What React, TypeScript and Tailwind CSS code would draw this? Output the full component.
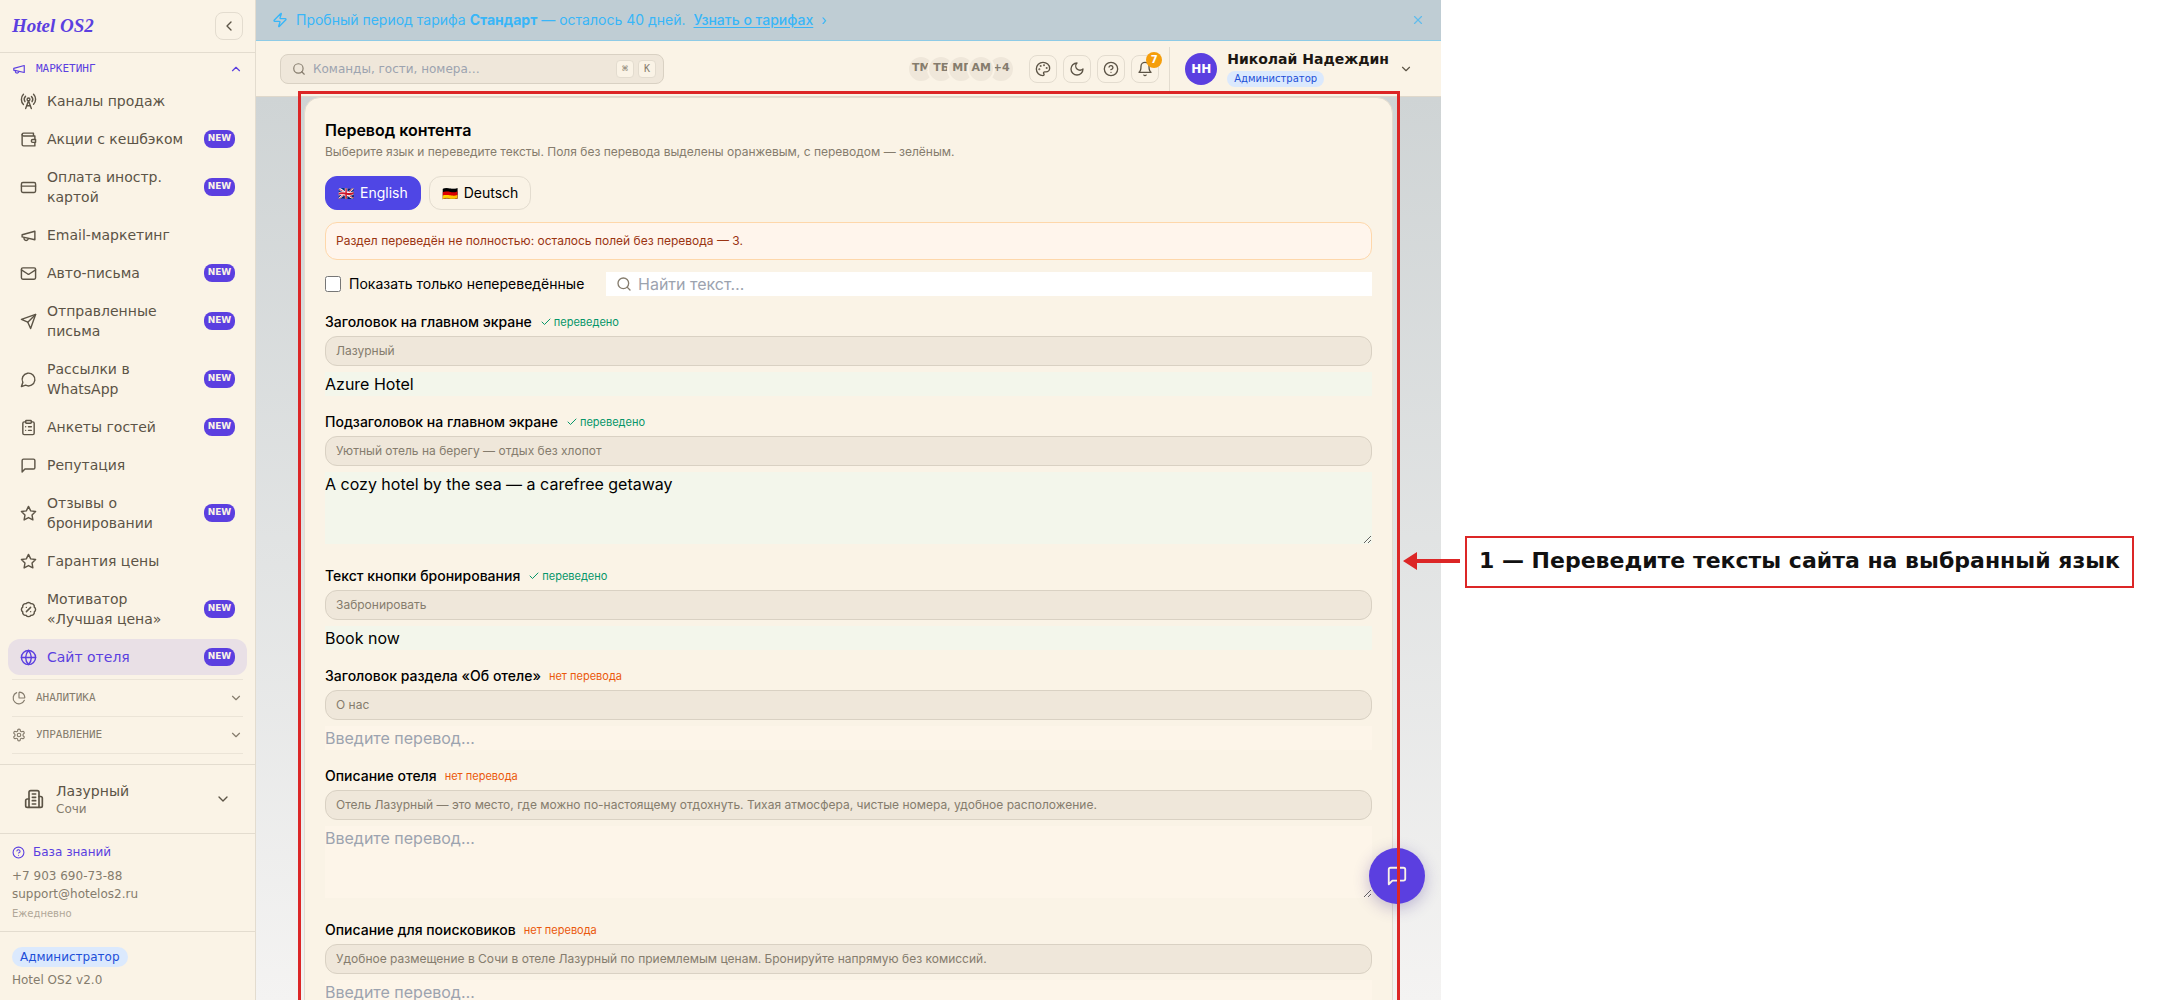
import React from "react";
import {
  RadioTower, CreditCard, Mail, ClipboardList, BadgePercent, Globe, PieChart, ChevronDown, ChevronUp, ChevronLeft,
  CircleHelp, Zap, X, Search, Check,
} from "lucide-react";

type IconProps = { className?: string };
type Icon = React.ComponentType<IconProps>;

function stroked(children: React.ReactNode): Icon {
  return function StrokedIcon({ className }: IconProps) {
    return (
      <svg viewBox="0 0 24 24" fill="none" stroke="currentColor" strokeWidth={2} strokeLinecap="round" strokeLinejoin="round" aria-hidden="true" className={className}>
        {children}
      </svg>
    );
  };
}

const Megaphone = stroked(<><path d="m3 11 18-5v12L3 14v-3z" /><path d="M11.6 16.8a3 3 0 1 1-5.8-1.6" /></>);
const Wallet = stroked(<><path d="M21 12V7H5a2 2 0 0 1 0-4h14v4" /><path d="M3 5v14a2 2 0 0 0 2 2h16v-5" /><path d="M18 12a2 2 0 0 0 0 4h4v-4Z" /></>);
const Send = stroked(<><path d="m22 2-7 20-4-9-9-4Z" /><path d="M22 2 11 13" /></>);
const MessageCircle = stroked(<path d="M7.9 20A9 9 0 1 0 4 16.1L2 22Z" />);
const MessageSquare = stroked(<path d="M21 15a2 2 0 0 1-2 2H7l-4 4V5a2 2 0 0 1 2-2h14a2 2 0 0 1 2 2z" />);
const Star = stroked(<polygon points="12 2 15.09 8.26 22 9.27 17 14.14 18.18 21.02 12 17.77 5.82 21.02 7 14.14 2 9.27 8.91 8.26 12 2" />);
const Building = stroked(
  <>
    <path d="M6 22V4a2 2 0 0 1 2-2h8a2 2 0 0 1 2 2v18Z" />
    <path d="M6 12H4a2 2 0 0 0-2 2v6a2 2 0 0 0 2 2h2" />
    <path d="M18 9h2a2 2 0 0 1 2 2v9a2 2 0 0 1-2 2h-2" />
    <path d="M10 6h4M10 10h4M10 14h4M10 18h4" />
  </>,
);
const Settings = stroked(
  <>
    <path d="M12.22 2h-.44a2 2 0 0 0-2 2v.18a2 2 0 0 1-1 1.73l-.43.25a2 2 0 0 1-2 0l-.15-.08a2 2 0 0 0-2.73.73l-.22.38a2 2 0 0 0 .73 2.73l.15.1a2 2 0 0 1 1 1.72v.51a2 2 0 0 1-1 1.74l-.15.09a2 2 0 0 0-.73 2.73l.22.38a2 2 0 0 0 2.73.73l.15-.08a2 2 0 0 1 2 0l.43.25a2 2 0 0 1 1 1.73V20a2 2 0 0 0 2 2h.44a2 2 0 0 0 2-2v-.18a2 2 0 0 1 1-1.73l.43-.25a2 2 0 0 1 2 0l.15.08a2 2 0 0 0 2.73-.73l.22-.39a2 2 0 0 0-.73-2.73l-.15-.08a2 2 0 0 1-1-1.74v-.5a2 2 0 0 1 1-1.74l.15-.09a2 2 0 0 0 .73-2.73l-.22-.38a2 2 0 0 0-2.73-.73l-.15.08a2 2 0 0 1-2 0l-.43-.25a2 2 0 0 1-1-1.73V4a2 2 0 0 0-2-2z" />
    <circle cx="12" cy="12" r="3" />
  </>,
);
const Moon = stroked(<path d="M12 3a6 6 0 0 0 9 9 9 9 0 1 1-9-9Z" />);
const Bell = stroked(<><path d="M6 8a6 6 0 0 1 12 0c0 7 3 9 3 9H3s3-2 3-9" /><path d="M10.3 21a1.94 1.94 0 0 0 3.4 0" /></>);
const Palette = stroked(
  <>
    <circle cx="13.5" cy="6.5" r=".5" fill="currentColor" />
    <circle cx="17.5" cy="10.5" r=".5" fill="currentColor" />
    <circle cx="8.5" cy="7.5" r=".5" fill="currentColor" />
    <circle cx="6.5" cy="12.5" r=".5" fill="currentColor" />
    <path d="M12 2C6.5 2 2 6.5 2 12s4.5 10 10 10c.926 0 1.648-.746 1.648-1.688 0-.437-.18-.835-.437-1.125-.29-.289-.438-.652-.438-1.125a1.64 1.64 0 0 1 1.668-1.668h1.996c3.051 0 5.555-2.503 5.555-5.554C21.965 6.012 17.461 2 12 2z" />
  </>,
);

const navItems: { icon: Icon; label: string; isNew?: boolean; active?: boolean }[] = [
  { icon: RadioTower, label: "Каналы продаж" },
  { icon: Wallet, label: "Акции с кешбэком", isNew: true },
  { icon: CreditCard, label: "Оплата иностр. картой", isNew: true },
  { icon: Megaphone, label: "Email-маркетинг" },
  { icon: Mail, label: "Авто-письма", isNew: true },
  { icon: Send, label: "Отправленные письма", isNew: true },
  { icon: MessageCircle, label: "Рассылки в WhatsApp", isNew: true },
  { icon: ClipboardList, label: "Анкеты гостей", isNew: true },
  { icon: MessageSquare, label: "Репутация" },
  { icon: Star, label: "Отзывы о бронировании", isNew: true },
  { icon: Star, label: "Гарантия цены" },
  { icon: BadgePercent, label: "Мотиватор «Лучшая цена»", isNew: true },
  { icon: Globe, label: "Сайт отеля", isNew: true, active: true },
];

const fields: { id: string; label: string; source: string; value: string; multiline?: boolean }[] = [
  { id: "hero-title", label: "Заголовок на главном экране", source: "Лазурный", value: "Azure Hotel" },
  { id: "hero-sub", label: "Подзаголовок на главном экране", source: "Уютный отель на берегу — отдых без хлопот", value: "A cozy hotel by the sea — a carefree getaway", multiline: true },
  { id: "cta", label: "Текст кнопки бронирования", source: "Забронировать", value: "Book now" },
  { id: "about-title", label: "Заголовок раздела «Об отеле»", source: "О нас", value: "" },
  { id: "about", label: "Описание отеля", source: "Отель Лазурный — это место, где можно по-настоящему отдохнуть. Тихая атмосфера, чистые номера, удобное расположение.", value: "", multiline: true },
  { id: "seo", label: "Описание для поисковиков", source: "Удобное размещение в Сочи в отеле Лазурный по приемлемым ценам. Бронируйте напрямую без комиссий.", value: "", multiline: true },
];

function Sidebar() {
  return (
    <aside className="flex w-64 shrink-0 flex-col border-r border-[#e3dccf] bg-[#faf3e6] font-['DejaVu_Sans',sans-serif] text-[#5c5446]">
      <div className="flex h-[53px] shrink-0 items-center justify-between border-b border-[#e3dccf] px-3">
        <span className="font-['Liberation_Serif',serif] text-[19px] font-bold text-[#5b3fe0] italic">Hotel OS2</span>
        <button aria-label="Свернуть меню" className="flex size-7 items-center justify-center rounded-lg border border-[#e3dccf]">
          <ChevronLeft className="size-4" />
        </button>
      </div>
      <nav className="min-h-0 flex-1 overflow-hidden">
        <button className="flex h-[30px] w-full items-center px-3 pt-[2px] font-['DejaVu_Sans_Mono',monospace] text-[11px] text-[#5b3fe0]">
          <Megaphone className="mr-[10px] size-[14px]" />
          МАРКЕТИНГ
          <ChevronUp className="ml-auto size-[14px]" />
        </button>
        <ul className="flex flex-col gap-[2px] px-2">
          {navItems.map(({ icon: I, label, isNew, active }) => (
            <li key={label}>
              <a href="#" className={active ? "flex items-center gap-[10px] rounded-xl bg-[#e9e0e6] px-3 py-2 text-sm text-[#5b3fe0]" : "flex items-center gap-[10px] rounded-xl px-3 py-2 text-sm"}>
                <I className="size-[17px] shrink-0" />
                <span className="flex-1">{label}</span>
                {isNew && <span className="h-[18px] w-[31px] shrink-0 rounded-lg bg-[#5b3fe0] text-center text-[9px] leading-4 font-bold text-[#faf3e6]">NEW</span>}
              </a>
            </li>
          ))}
        </ul>
        <div className="mt-1 px-3 font-['DejaVu_Sans_Mono',monospace] text-[11px] text-[#857c6d]">
          <button className="flex h-[37px] w-full items-center border-t border-[#ebe4d7]">
            <PieChart className="mr-[10px] size-[14px]" />
            АНАЛИТИКА
            <ChevronDown className="ml-auto size-[14px]" />
          </button>
          <button className="flex h-[38px] w-full items-center border-y border-[#ebe4d7]">
            <Settings className="mr-[10px] size-[14px]" />
            УПРАВЛЕНИЕ
            <ChevronDown className="ml-auto size-[14px]" />
          </button>
        </div>
      </nav>
      <button className="flex h-[69px] shrink-0 items-center border-t border-[#e3dccf] px-6 text-left">
        <Building className="mr-3 size-5" />
        <span className="flex-1">
          <span className="block text-sm">Лазурный</span>
          <span className="block text-xs text-[#857c6d]">Сочи</span>
        </span>
        <ChevronDown className="size-4" />
      </button>
      <div className="flex h-[98px] shrink-0 flex-col border-t border-[#e3dccf] px-3 pt-[9px] text-xs leading-[18px] text-[#857c6d]">
        <a href="#" className="mb-[6px] flex items-center gap-2 text-[#5b3fe0]">
          <CircleHelp className="size-[13px]" />
          База знаний
        </a>
        <a href="#">+7 903 690-73-88</a>
        <a href="#">support@hotelos2.ru</a>
        <span className="mt-[2px] text-[10px] text-[#b0a798]">Ежедневно</span>
      </div>
      <div className="flex h-[69px] shrink-0 flex-col items-start border-t border-[#e3dccf] px-3 pt-[15px] text-xs text-[#857c6d]">
        <span className="rounded-full bg-[#dbe9fd] px-2 leading-5 text-[#1d4fd8]">Администратор</span>
        <span className="mt-[5px]">Hotel OS2 v2.0</span>
      </div>
    </aside>
  );
}

function Banner() {
  return (
    <div className="flex h-[41px] shrink-0 items-center border-b border-[#8ecbe6] bg-[#bfcdd4] px-4 text-sm text-[#38b6f8]">
      <Zap className="mr-2 size-4" />
      <p>
        Пробный период тарифа <strong className="font-bold">Стандарт</strong> — осталось 40 дней.
      </p>
      <a href="#" className="ml-2 font-medium underline underline-offset-2">Узнать о тарифах</a>
      <span className="ml-2">›</span>
      <button aria-label="Закрыть" className="ml-auto opacity-70">
        <X className="size-[14px]" />
      </button>
    </div>
  );
}

const avatars = ["ТМ", "ТБ", "МГ", "АМ", "+4"];

function Header() {
  return (
    <header className="flex h-14 shrink-0 items-center border-b border-[#dfd8cb] bg-[#faf3e6] pr-7 pl-6 font-['DejaVu_Sans',sans-serif] text-[#5c5446]">
      <label className="flex h-[30px] w-[384px] items-center rounded-lg border border-[#d9d1c3] bg-[#efe7da] pr-[7px] pl-2">
        <Search className="mx-[3px] size-[14px] text-[#857c6d]" />
        <input aria-label="Поиск" placeholder="Команды, гости, номера…" className="ml-1 min-w-0 flex-1 bg-transparent text-xs outline-none placeholder:text-[#9ca3af]" />
        <kbd className="mr-1 flex size-[18px] items-center justify-center rounded border border-[#e3dccf] bg-[#faf3e6] font-['DejaVu_Sans_Mono',monospace] text-[10px] text-[#857c6d]">⌘</kbd>
        <kbd className="flex size-[18px] items-center justify-center rounded border border-[#e3dccf] bg-[#faf3e6] font-['DejaVu_Sans_Mono',monospace] text-[10px] text-[#857c6d]">K</kbd>
      </label>
      <div className="isolate ml-auto flex -space-x-2">
        {avatars.map((a) => (
          <span key={a} className={a === "АМ" ? "z-10 flex size-7 items-center justify-center rounded-full border-2 border-[#faf3e6] bg-[#efe7da] text-[11px] font-bold text-[#857c6d]" : "flex size-7 items-center justify-center rounded-full border-2 border-[#faf3e6] bg-[#efe7da] text-[11px] font-bold text-[#857c6d]"}>{a}</span>
        ))}
      </div>
      <div className="ml-[14px] flex gap-[6px]">
        {[{ i: Palette, l: "Тема" }, { i: Moon, l: "Ночной режим" }, { i: CircleHelp, l: "Помощь" }].map(({ i: I, l }) => (
          <button key={l} aria-label={l} className="flex size-7 items-center justify-center rounded-lg border border-[#e3dccf]">
            <I className="size-4" />
          </button>
        ))}
        <button aria-label="Уведомления" className="relative flex size-7 items-center justify-center rounded-lg border border-[#e3dccf]">
          <Bell className="size-4" />
          <span className="absolute -top-1 -right-1 flex size-4 items-center justify-center rounded-full bg-[#f59e0b] text-[10px] font-bold text-white">7</span>
        </button>
      </div>
      <div className="ml-[10px] h-11 w-px bg-[#e3dccf]" />
      <button className="ml-[15px] flex items-center text-left">
        <span className="mr-[10px] flex size-8 items-center justify-center rounded-full bg-[#5b3fe0] text-xs font-bold text-white">НН</span>
        <span className="flex flex-col items-start gap-1">
          <span className="text-sm leading-4 font-bold text-[#1c1712]">Николай Надеждин</span>
          <span className="rounded-full bg-[#dbe9fd] px-[7px] text-[10px] leading-4 text-[#1d4fd8]">Администратор</span>
        </span>
        <ChevronDown className="ml-[10px] size-[14px]" />
      </button>
    </header>
  );
}

function TranslationCard() {
  return (
    <section className="rounded-2xl border border-[#e3dccf] bg-[#faf3e6] p-5 text-black">
      <h2 className="text-base font-semibold">Перевод контента</h2>
      <p className="mt-[2px] text-xs text-[#857c6d]">Выберите язык и переведите тексты. Поля без перевода выделены оранжевым, с переводом — зелёным.</p>
      <div className="mt-4 flex gap-2 text-sm">
        <button className="flex h-[34px] items-center gap-[6px] rounded-xl border border-[#4f46e5] bg-[#4f46e5] px-3 text-white"><span className="text-[13px]">🇬🇧</span>English</button>
        <button className="flex h-[34px] items-center gap-[6px] rounded-xl border border-[#e3dccf] px-3"><span className="text-[13px]">🇩🇪</span>Deutsch</button>
      </div>
      <div className="mt-3 rounded-xl border border-[#fed7aa] bg-[#fff5ec] p-[10px] text-xs text-[#9a3412]">Раздел переведён не полностью: осталось полей без перевода — 3.</div>
      <div className="mt-3 flex items-center gap-3">
        <label className="flex w-[269px] items-center gap-2 text-sm">
          <input type="checkbox" className="size-4" />
          Показать только непереведённые
        </label>
        <label className="flex h-6 flex-1 items-center gap-[6px] bg-white px-[10px]">
          <Search className="size-4 text-[#857c6d]" />
          <input aria-label="Найти текст" placeholder="Найти текст…" className="min-w-0 flex-1 outline-none placeholder:text-[#9ca3af]" />
        </label>
      </div>
      <div className="mt-4 flex flex-col gap-4">
        {fields.map((f) => {
          const tone = f.value ? "block w-full bg-[#f3f6eb] outline-none" : "block w-full bg-[#fdf5e9] outline-none placeholder:text-[#9ca3af]";
          return (
            <div key={f.id}>
              <div className="flex items-center gap-2">
                <label htmlFor={f.id} className="text-sm font-medium">{f.label}</label>
                {f.value ? (
                  <span className="flex items-center gap-[2px] text-[11px] text-[#059669]"><Check className="size-3" />переведено</span>
                ) : (
                  <span className="text-[11px] text-[#ea580c]">нет перевода</span>
                )}
              </div>
              <div className="mt-1 mb-[6px] rounded-xl border border-[#d9d1c3] bg-[#efe7da] px-[10px] py-[6px] text-xs text-[#857c6d]">{f.source}</div>
              {f.multiline ? (
                <div className="pb-[6px]"><textarea id={f.id} rows={3} defaultValue={f.value} placeholder="Введите перевод…" className={tone} /></div>
              ) : (
                <input id={f.id} defaultValue={f.value} placeholder="Введите перевод…" className={tone} />
              )}
            </div>
          );
        })}
      </div>
    </section>
  );
}

function Callout() {
  return (
    <aside className="shrink-0 pt-[536px] pr-[23px] pl-6">
      <p className="relative border-2 border-[#dc2626] bg-white px-3 pt-2 pb-[10px] font-['DejaVu_Sans',sans-serif] text-[22px] leading-[30px] font-bold whitespace-nowrap text-[#111111]">
        1 — Переведите тексты сайта на выбранный язык
        <svg viewBox="0 0 58 18" className="absolute top-[14px] -left-[64px] h-[18px] w-[58px] fill-[#dc2626]" aria-hidden="true">
          <path d="M0 9 14 0V7H57V11H14V18Z" />
        </svg>
      </p>
    </aside>
  );
}

export default function App() {
  return (
    <div className="flex h-screen overflow-hidden bg-white font-['Inter',sans-serif]">
      <div className="relative flex min-w-0 flex-1">
        <Sidebar />
        <div className="flex min-w-0 flex-1 flex-col">
          <Banner />
          <Header />
          <main className="min-h-0 flex-1 overflow-hidden bg-linear-to-b from-[#cfd4d5] to-[#f4f3f2] px-12">
            <TranslationCard />
          </main>
        </div>
        <button aria-label="Чат" className="absolute right-4 bottom-24 flex size-14 items-center justify-center rounded-full bg-[#5b3fe0] text-[#faf3e6] shadow-[0_4px_16px_rgba(60,40,140,0.3)]">
          <MessageSquare className="size-[22px]" />
        </button>
        <div className="pointer-events-none absolute top-[91px] right-[41px] -bottom-1 left-[298px] border-3 border-[#dc2626]" />
      </div>
      <Callout />
    </div>
  );
}
